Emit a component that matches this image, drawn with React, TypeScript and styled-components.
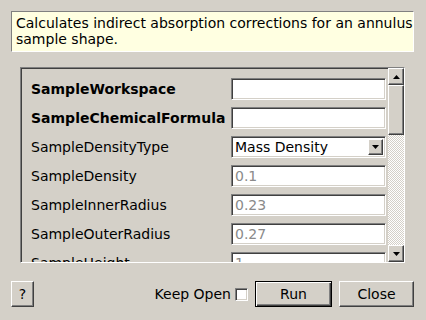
import React from 'react'
import styled, { createGlobalStyle } from 'styled-components'

const Global = createGlobalStyle`
  html, body {
    margin: 0;
    padding: 0;
    background: #d4d0c8;
  }
  body {
    font-family: "DejaVu Sans", "Liberation Sans", sans-serif;
    font-size: 14px;
    color: #000;
  }
`

const Dialog = styled.div`
  width: 426px;
  height: 320px;
  background: #d4d0c8;
  box-sizing: border-box;
  padding: 11px 12px 0 11px;
  display: flex;
  flex-direction: column;
  overflow: hidden;
`

const Description = styled.div`
  height: 41px;
  box-sizing: border-box;
  background: #ffffe1;
  border-top: 1px solid #808080;
  border-left: 1px solid #808080;
  border-right: 1px solid #ffffff;
  border-bottom: 1px solid #ffffff;
  padding: 3px 4px;
  line-height: 16px;
  white-space: nowrap;
`

const ScrollFrame = styled.div`
  margin: 15px 9px 0 9px;
  height: 196px;
  box-sizing: border-box;
  border-top: 1px solid #808080;
  border-left: 1px solid #808080;
  border-right: 1px solid #ffffff;
  border-bottom: 1px solid #ffffff;
  box-shadow: inset 1px 1px 0 #404040;
  display: flex;
  overflow: hidden;
`

const Content = styled.div`
  flex: 1;
  padding: 10px 1px 0 10px;
  display: flex;
  flex-direction: column;
  gap: 7px;
  overflow: hidden;
`

const Row = styled.div`
  display: flex;
  align-items: center;
  height: 22px;
  flex-shrink: 0;
`

const Label = styled.div<{ $bold?: boolean }>`
  width: 200px;
  font-weight: ${p => (p.$bold ? 'bold' : 'normal')};
  white-space: nowrap;
`

const Field = styled.div<{ $muted?: boolean }>`
  width: 155px;
  height: 22px;
  box-sizing: border-box;
  background: #fff;
  border-top: 1px solid #808080;
  border-left: 1px solid #808080;
  border-right: 1px solid #ffffff;
  border-bottom: 1px solid #ffffff;
  box-shadow: inset 1px 1px 0 #404040, inset -1px -1px 0 #d4d0c8;
  padding: 1px 3px 0 3px;
  line-height: 18px;
  color: ${p => (p.$muted ? '#8a8a8a' : '#000')};
`

const Combo = styled(Field)`
  display: flex;
  align-items: center;
  justify-content: space-between;
  padding: 2px 2px 2px 3px;
`

const ArrowButton = styled.div<{ $w?: number; $h?: number }>`
  width: ${p => p.$w ?? 16}px;
  height: ${p => p.$h ?? 16}px;
  box-sizing: border-box;
  background: #d4d0c8;
  border-top: 1px solid #ffffff;
  border-left: 1px solid #ffffff;
  border-right: 1px solid #404040;
  border-bottom: 1px solid #404040;
  box-shadow: inset -1px -1px 0 #808080;
  display: flex;
  align-items: center;
  justify-content: center;
  flex-shrink: 0;
`

const ScrollBar = styled.div`
  width: 16px;
  display: flex;
  flex-direction: column;
  background-color: #d4d0c8;
  background-image: conic-gradient(#ffffff 25%, #d4d0c8 0 50%, #ffffff 0 75%, #d4d0c8 0);
  background-size: 2px 2px;
`

const Thumb = styled(ArrowButton)`
  height: 50px;
`

const Spacer = styled.div`
  flex: 1;
`

const Footer = styled.div`
  margin-top: 18px;
  display: flex;
  align-items: center;
  gap: 7px;
`

const Button = styled.button<{ $w: number; $default?: boolean }>`
  width: ${p => p.$w}px;
  height: 26px;
  box-sizing: border-box;
  margin: 0;
  padding: 0;
  font: inherit;
  color: #000;
  background: #d4d0c8;
  border: 1px solid ${p => (p.$default ? '#000' : 'transparent')};
  box-shadow: ${p =>
    p.$default
      ? 'inset 1px 1px 0 #fff, inset -1px -1px 0 #404040, inset -2px -2px 0 #808080'
      : 'none'};
  ${p =>
    !p.$default &&
    `border-top-color: #fff; border-left-color: #fff; border-right-color: #404040; border-bottom-color: #404040;
     box-shadow: inset -1px -1px 0 #808080;`}
`

const KeepOpen = styled.label`
  margin-left: auto;
  display: flex;
  align-items: center;
  gap: 4px;
`

const Check = styled.span`
  width: 13px;
  height: 13px;
  box-sizing: border-box;
  background: #fff;
  border-top: 1px solid #808080;
  border-left: 1px solid #808080;
  border-right: 1px solid #fff;
  border-bottom: 1px solid #fff;
  box-shadow: inset 1px 1px 0 #404040, inset -1px -1px 0 #d4d0c8;
`

const Arrow = ({ up }: { up?: boolean }) => (
  <svg width="7" height="4" viewBox="0 0 7 4">
    <path d={up ? 'M3.5 0 L7 4 L0 4 Z' : 'M0 0 L7 0 L3.5 4 Z'} fill="#000" />
  </svg>
)

const rows = [
  { name: 'SampleWorkspace', bold: true, value: '' },
  { name: 'SampleChemicalFormula', bold: true, value: '' },
  { name: 'SampleDensityType', combo: true, value: 'Mass Density' },
  { name: 'SampleDensity', value: '0.1' },
  { name: 'SampleInnerRadius', value: '0.23' },
  { name: 'SampleOuterRadius', value: '0.27' },
  { name: 'SampleHeight', value: '1' },
]

const App = () => (
  <Dialog>
    <Global />
    <Description>
      Calculates indirect absorption corrections for an annulus
      <br />
      sample shape.
    </Description>
    <ScrollFrame>
      <Content>
        {rows.map(r => (
          <Row key={r.name}>
            <Label $bold={r.bold}>{r.name}</Label>
            {r.combo ? (
              <Combo>
                <span>{r.value}</span>
                <ArrowButton $w={15} $h={16}>
                  <Arrow />
                </ArrowButton>
              </Combo>
            ) : (
              <Field $muted>{r.value}</Field>
            )}
          </Row>
        ))}
      </Content>
      <ScrollBar>
        <ArrowButton $h={17}>
          <Arrow up />
        </ArrowButton>
        <Thumb />
        <Spacer />
        <ArrowButton $h={17}>
          <Arrow />
        </ArrowButton>
      </ScrollBar>
    </ScrollFrame>
    <Footer>
      <Button $w={23}>?</Button>
      <KeepOpen>
        Keep Open <Check />
      </KeepOpen>
      <Button $w={77} $default>Run</Button>
      <Button $w={75}>Close</Button>
    </Footer>
  </Dialog>
)

export default App
